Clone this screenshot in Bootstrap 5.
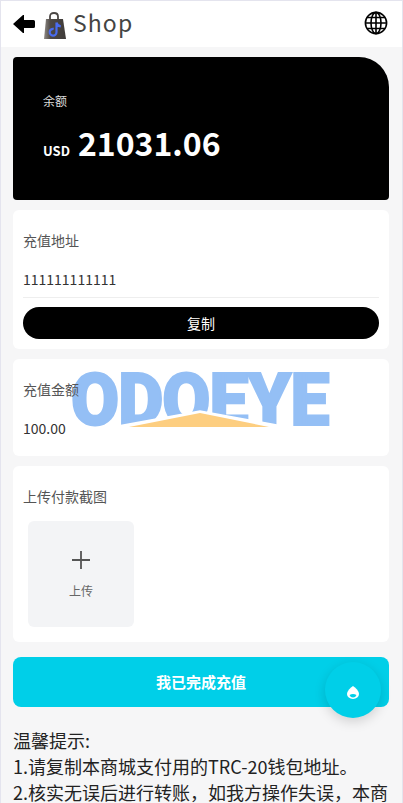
<!DOCTYPE html>
<html lang="en">
<head>
    <meta charset="UTF-8" />
    <title>Shop</title>
    <meta name="viewport" content="width=device-width, initial-scale=1" />
    <link href="https://cdn.jsdelivr.net/npm/bootstrap@5.3.3/dist/css/bootstrap.min.css" rel="stylesheet" />
    <style>
        html, body { height: 803px; overflow: hidden; }
        body { font-family: "Noto Sans CJK SC", "Noto Sans", sans-serif; background: #e4e4ee; color: #333; }
        .frame { margin: 1px 1px 0 1px; height: 802px; background: #f6f6f7; position: relative; overflow: hidden; }
        .topbar { height: 46px; background: #fff; padding: 0 14px 0 12px; }
        .bag-icon { margin-top: 2px; }
        .globe-icon { margin-top: -2px; }
        .shop-name { font-size: 23px; letter-spacing: 1.1px; color: #444; line-height: 1; margin: -4px 0 0 7px; }
        .content { padding: 10px 13px 0 12px; }
        .balance { height: 143px; background: #000; border-radius: 4px 30px 4px 4px; padding: 36px 30px 0; color: #fff; }
        .balance-label { font-size: 12px; line-height: 16px; color: #ddd; }
        .balance-row { margin-top: 9px; line-height: 48px; height: 48px; }
        .currency { font-size: 13px; font-weight: 700; margin-right: 8px; }
        .amount { font-size: 32px; font-weight: 700; }
        .panel { background: #fff; border-radius: 6px; margin-top: 10px; padding: 0 10px; font-size: 14px; }
        .panel-label { color: #555; line-height: 20px; }
        .addr { height: 139px; padding-top: 20px; }
        .addr-value { margin-top: 19px; line-height: 20px; padding-bottom: 8px; border-bottom: 1px solid #eee; color: #333; }
        .copy-btn { width: 100%; height: 32px; margin-top: 9px; padding: 0; border: 0; border-radius: 16px; background: #000; color: #fff; font-size: 14px; line-height: 32px; }
        .amount-panel { height: 97px; padding-top: 20px; }
        .amount-panel .panel-label { position: relative; z-index: 2; }
        .amount-value { margin-top: 19px; line-height: 20px; color: #333; }
        .upload-panel { height: 176px; padding-top: 20px; }
        .upload-box { width: 106px; height: 106px; margin: 15px 0 0 5px; padding-top: 2px; background: #f3f4f6; border-radius: 6px; color: #666; font-size: 12px; }
        .upload-gap { margin-top: 13px; }
        .submit-btn { width: 100%; height: 50px; margin-top: 15px; border: 0; border-radius: 8px; background: #00cfe8; color: #fff; font-size: 15px; font-weight: 700; }
        .notes { margin-top: 20px; font-size: 18px; line-height: 26px; color: #222; white-space: nowrap; }
        .fab { position: absolute; left: 324px; top: 661px; width: 56px; height: 56px; border-radius: 50%; background: #00cfe8; box-shadow: 0 4px 12px rgba(0,0,0,.15); }
        .mark-over { position: absolute; left: 70px; top: 372px; width: 262px; height: 58px; pointer-events: none; }
        .mark-text { display: block; font-family: Roboto, "Liberation Sans", sans-serif; font-weight: 900; font-size: 73px; line-height: 54px; height: 54px; color: #94bff5; letter-spacing: -1px; transform: scaleX(.955); transform-origin: 0 0; -webkit-text-stroke: 2px #94bff5; white-space: nowrap; }
        .mark-roof { position: absolute; left: 36px; top: 0; width: 190px; height: 58px; }
    </style>
</head>
<body>
<div class="frame">
    <div class="topbar d-flex align-items-center">
        <svg width="22" height="20" viewBox="0 0 22 20"><path d="M0 10 10 1h1v5h9.500q1.500 0 1.500 1.500v5q0 1.500-1.500 1.500H11v5h-1z" fill="#000"/></svg>
        <svg class="bag-icon ms-2" width="23" height="27" viewBox="0 0 23 27">
            <defs>
                <linearGradient id="bagFill" x1="0" x2="1" y1="0" y2="0">
                    <stop offset="0" stop-color="#8f8a86"/>
                    <stop offset=".3" stop-color="#4d4845"/>
                    <stop offset="1" stop-color="#3f3b39"/>
                </linearGradient>
            </defs>
            <path d="M7 8V4.500Q7 1 11 1q4 0 4 3.500V8" fill="none" stroke="#4a4644" stroke-width="1.800"/>
            <path d="M3 7h17l3 20H1z" fill="url(#bagFill)"/>
            <path d="M13.500 10.500v9.800a3.400 3.400 0 1 1-2.800-3.400M13.500 10.500c.4 2.600 2.200 3.600 4.300 3.800" fill="none" stroke="#4a6cf0" stroke-width="2.200"/>
        </svg>
        <span class="shop-name">Shop</span>
        <svg class="globe-icon ms-auto" width="24" height="24" viewBox="0 0 24 24" fill="none" stroke="#000" stroke-width="1.600">
            <circle cx="12" cy="12" r="10.600"/>
            <ellipse cx="12" cy="12" rx="5" ry="10.600"/>
            <path d="M12 1v22M1.500 12h21M3 6.500h18M3 17.500h18"/>
        </svg>
    </div>

    <div class="content">
        <div class="balance">
            <div class="balance-label">余额</div>
            <div class="balance-row"><span class="currency">USD</span><span class="amount">21031.06</span></div>
        </div>

        <div class="panel addr">
            <div class="panel-label">充值地址</div>
            <div class="addr-value">111111111111</div>
            <button class="copy-btn" type="button">复制</button>
        </div>

        <div class="panel amount-panel">
            <div class="panel-label">充值金额</div>
            <div class="amount-value">100.00</div>
        </div>

        <div class="panel upload-panel">
            <div class="panel-label">上传付款截图</div>
            <div class="upload-box d-flex flex-column align-items-center justify-content-center">
                <svg width="18" height="18" viewBox="0 0 18 18"><path d="M9 0v18M0 9h18" stroke="#555" stroke-width="1.800"/></svg>
                <span class="upload-gap">上传</span>
            </div>
        </div>

        <button class="submit-btn" type="button">我已完成充值</button>

        <div class="notes">
            温馨提示:<br />
            1.请复制本商城支付用的TRC-20钱包地址。<br />
            2.核实无误后进行转账，如我方操作失误，本商
        </div>
    </div>

    <div class="mark-over">
        <span class="mark-text">ODOEYE</span>
        <svg class="mark-roof" viewBox="0 0 190 58"><path d="M0 55 93 38 186 55" fill="#fff" stroke="#fff" stroke-width="1.500"/><path d="M22 54 93 40 162 54z" fill="#fdce80"/></svg>
    </div>

    <div class="fab d-flex align-items-center justify-content-center">
        <svg class="mt-1" width="12" height="13" viewBox="0 0 12 13"><path d="M6 0q2 1 4 3.500Q12 6 12 8a6 5 0 0 1-12 0q0-2 2-4.500T6 0z" fill="#fff"/><path d="M2.500 9q3.500-2 7 0-1 2.500-3.500 2.500T2.500 9z" fill="#00cfe8"/></svg>
    </div>
</div>
<script src="https://cdn.jsdelivr.net/npm/bootstrap@5.3.3/dist/js/bootstrap.bundle.min.js"></script>
</body>
</html>
